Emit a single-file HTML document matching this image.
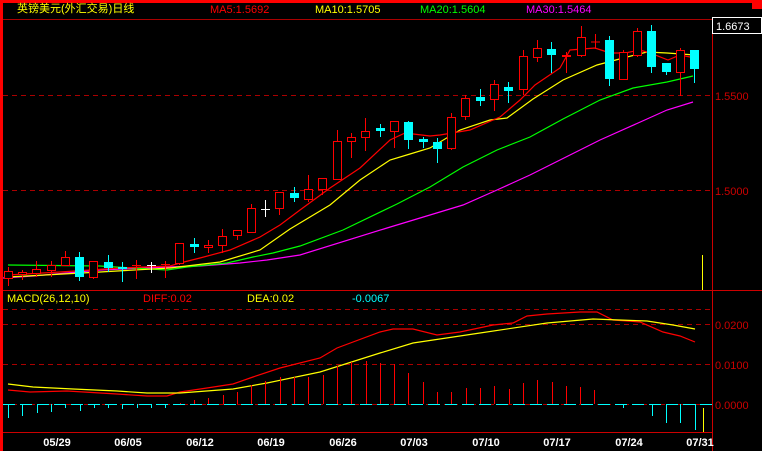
<!DOCTYPE html>
<html><head><meta charset="utf-8"><style>
html,body{margin:0;padding:0;background:#000;width:762px;height:451px;overflow:hidden}
svg{display:block}
text{font-family:"Liberation Sans","Noto Sans CJK SC",sans-serif;font-size:11px}
</style></head><body>
<svg width="762" height="451" viewBox="0 0 762 451" xmlns="http://www.w3.org/2000/svg" shape-rendering="crispEdges">
<rect width="762" height="451" fill="#000"/>
<rect x="0" y="0" width="762" height="3" fill="#f00"/>
<rect x="752" y="0" width="10" height="9" fill="#f00"/>
<rect x="0" y="0" width="3" height="451" fill="#f00"/>
<line x1="3" y1="19.5" x2="712" y2="19.5" stroke="#a00"/>
<line x1="712.5" y1="19" x2="712.5" y2="451" stroke="#c00"/>
<line x1="3" y1="290.5" x2="762" y2="290.5" stroke="#c00"/>
<line x1="3" y1="432.5" x2="712" y2="432.5" stroke="#c00"/>
<g stroke="#a00" stroke-dasharray="5,4">
<line x1="3" y1="95.5" x2="712" y2="95.5"/>
<line x1="3" y1="190.5" x2="712" y2="190.5"/>
<line x1="3" y1="309.5" x2="712" y2="309.5"/>
<line x1="3" y1="324.5" x2="712" y2="324.5"/>
<line x1="3" y1="364.5" x2="712" y2="364.5"/>
<line x1="3" y1="404.5" x2="712" y2="404.5"/>
</g>
<text x="17" y="12" fill="#ff0" font-size="12">英镑美元(外汇交易)日线</text>
<text x="210" y="13" fill="#f00">MA5:1.5692</text>
<text x="315" y="13" fill="#ff0">MA10:1.5705</text>
<text x="420" y="13" fill="#0f0">MA20:1.5604</text>
<text x="526" y="13" fill="#f0f">MA30:1.5464</text>
<rect x="712.5" y="17.5" width="49" height="16" fill="#000" stroke="#fff"/>
<text x="716" y="30" fill="#fff" font-size="12">1.6673</text>
<g fill="#c00" font-size="13">
<text x="715" y="100">1.5500</text>
<text x="715" y="195">1.5000</text>
<text x="715" y="329">0.0200</text>
<text x="715" y="369">0.0100</text>
<text x="715" y="409">0.0000</text>
</g>
<text x="7" y="302" fill="#ff0">MACD(26,12,10)</text>
<text x="143" y="302" fill="#f00">DIFF:0.02</text>
<text x="247" y="302" fill="#ff0">DEA:0.02</text>
<text x="352" y="302" fill="#0ff">-0.0067</text>
<g fill="#fff" font-weight="bold" font-size="13" text-anchor="middle" font-family="Liberation Mono">
<text x="57" y="446">05/29</text><text x="128" y="446">06/05</text><text x="200" y="446">06/12</text><text x="271" y="446">06/19</text><text x="343" y="446">06/26</text><text x="414" y="446">07/03</text><text x="486" y="446">07/10</text><text x="557" y="446">07/17</text><text x="629" y="446">07/24</text><text x="700" y="446">07/31</text>
</g>
<line x1="702.5" y1="255" x2="702.5" y2="290" stroke="#ff0"/>
<g fill="none" shape-rendering="auto" stroke-width="1.2">
<polyline stroke="#f0f" points="3,278 33,276 67,273 100,270 167,267 200,266 240,263 267,260 300,255 387,228 430,215 463,205 497,190 530,175 560,160 600,140 647,119 667,110 693,102"/>
<polyline stroke="#0f0" points="8,265 100,266 167,270 187,267 227,263 253,257 273,253 300,246 343,230 397,204 430,187 463,167 497,150 530,137 563,119 600,100 633,88 667,82 693,76"/>
<polyline stroke="#ff0" points="8,277 100,272 170,268 220,262 260,250 290,229 330,205 360,180 390,160 410,154 430,148 460,130 490,120 507,118 533,99 563,80 597,65 627,57 647,52 667,53 695,55"/>
<polyline stroke="#f00" points="8,275 60,272 120,268 170,266 180,263 200,258 230,250 260,237 280,225 300,210 330,188 360,168 390,140 405,133 430,136 440,135 470,130 500,117 520,100 535,85 560,68 570,50 595,48 610,53 625,53 640,50 650,53 668,60 680,55 695,58"/>
</g>
<!-- wicks -->
<path fill="none" stroke="#f00" d="M8.5 267V286M22.5 270V280M36.5 261V277M51.5 261V277M65.5 251V265M93.5 261V279M136.5 260V279M165.5 261V278M179.5 243V265M208.5 240V253M222.5 229V253M237.5 230V240M251.5 204V233M279.5 192V215M308.5 175V202M322.5 178V195M337.5 130V179M351.5 133V158M365.5 118V151M394.5 121V148M451.5 113V150M465.5 95V120M494.5 80V111M523.5 50V95M537.5 40V62M566.5 52V73M581.5 26V57M595.5 34V49M623.5 50V79M637.5 28V57M680.5 48V96M132 265.5H141M161 264.5H170M591 42H600"/>
<path fill="none" stroke="#f00" stroke-width="2" d="M562 56H571"/>
<path fill="none" stroke="#fff" d="M151.5 262V273M147 265.5H156M265.5 200V217M261 209.5H270"/>
<path fill="none" stroke="#0ff" d="M79.5 252V281M108.5 255V272M122.5 262V282M194.5 238V253M294.5 187V202M380.5 124V137M408.5 121V149M423.5 137V148M437.5 138V163M480.5 89V106M508.5 82V103M551.5 42V73M609.5 36V86M651.5 25V73M666.5 63V75M694.5 50V83"/>
<g fill="#000" stroke="#f00">
<rect x="4.5" y="271.5" width="8" height="7"/><rect x="18.5" y="272.5" width="8" height="2"/><rect x="32.5" y="269.5" width="8" height="4"/><rect x="47.5" y="265.5" width="8" height="5"/><rect x="61.5" y="257.5" width="8" height="8"/><rect x="89.5" y="261.5" width="8" height="16"/><rect x="175.5" y="243.5" width="8" height="20"/><rect x="204.5" y="245.5" width="8" height="2"/><rect x="218.5" y="236.5" width="8" height="9"/><rect x="233.5" y="230.5" width="8" height="5"/><rect x="247.5" y="208.5" width="8" height="24"/><rect x="275.5" y="192.5" width="8" height="16"/><rect x="304.5" y="189.5" width="8" height="10"/><rect x="318.5" y="178.5" width="8" height="11"/><rect x="333.5" y="141.5" width="8" height="38"/><rect x="347.5" y="137.5" width="8" height="4"/><rect x="361.5" y="131.5" width="8" height="6"/><rect x="390.5" y="121.5" width="8" height="10"/><rect x="447.5" y="117.5" width="8" height="31"/><rect x="461.5" y="98.5" width="8" height="18"/><rect x="490.5" y="84.5" width="8" height="15"/><rect x="519.5" y="56.5" width="8" height="33"/><rect x="533.5" y="48.5" width="8" height="9"/><rect x="577.5" y="37.5" width="8" height="18"/><rect x="619.5" y="52.5" width="8" height="27"/><rect x="633.5" y="31.5" width="8" height="24"/><rect x="676.5" y="50.5" width="8" height="22"/>
</g>
<g fill="#0ff">
<rect x="75" y="257" width="9" height="20"/><rect x="104" y="262" width="9" height="6"/><rect x="118" y="267" width="9" height="2"/><rect x="190" y="244" width="9" height="3"/><rect x="290" y="193" width="9" height="5"/><rect x="376" y="128" width="9" height="3"/><rect x="404" y="122" width="9" height="18"/><rect x="419" y="139" width="9" height="3"/><rect x="433" y="142" width="9" height="7"/><rect x="476" y="97" width="9" height="4"/><rect x="504" y="87" width="9" height="4"/><rect x="547" y="49" width="9" height="6"/><rect x="605" y="40" width="9" height="39"/><rect x="647" y="31" width="9" height="36"/><rect x="662" y="63" width="9" height="9"/><rect x="690" y="50" width="9" height="19"/>
</g>
<!-- MACD -->
<g fill="none" shape-rendering="auto" stroke-width="1.2">
<polyline stroke="#f00" points="8,390 30,392 67,391 117,394 147,396 167,396 180,392 207,388 233,384 253,377 280,368 320,358 337,348 380,332 393,329 413,329 437,335 460,332 493,325 513,323 527,316 547,314 580,312 597,312 613,320 640,322 663,332 680,336 695,342"/>
<polyline stroke="#ff0" points="8,384 33,387 73,389 117,391 147,393 180,393 233,389 267,383 320,372 380,353 413,343 480,333 547,323 593,319 647,321 673,325 695,329"/>
</g>
<line x1="3" y1="404.5" x2="712" y2="404.5" stroke="#0ff" stroke-dasharray="12,5"/>
<path fill="none" stroke="#0ff" d="M8.5 404V418M22.5 404V416M37.5 404V413M51.5 404V412M65.5 404V408M80.5 404V411M94.5 404V408M108.5 404V408M122.5 404V409M137.5 404V408M151.5 404V408M165.5 404V408M623.5 404V408M638.5 404V405M652.5 404V416M666.5 404V423M680.5 404V423M695.5 404V430"/>
<path fill="none" stroke="#f00" d="M180.5 404V403M194.5 404V400M208.5 404V398M223.5 404V395M237.5 404V392M251.5 404V385M265.5 404V381M280.5 404V377M294.5 404V377M308.5 404V377M323.5 404V375M337.5 404V366M351.5 404V362M366.5 404V361M380.5 404V363M394.5 404V364M408.5 404V373M423.5 404V382M437.5 404V392M451.5 404V392M466.5 404V388M480.5 404V388M494.5 404V386M509.5 404V389M523.5 404V383M537.5 404V380M552.5 404V382M566.5 404V386M580.5 404V387M594.5 404V390"/>
<line x1="703.5" y1="408" x2="703.5" y2="432" stroke="#ff0"/>
</svg>
</body></html>
